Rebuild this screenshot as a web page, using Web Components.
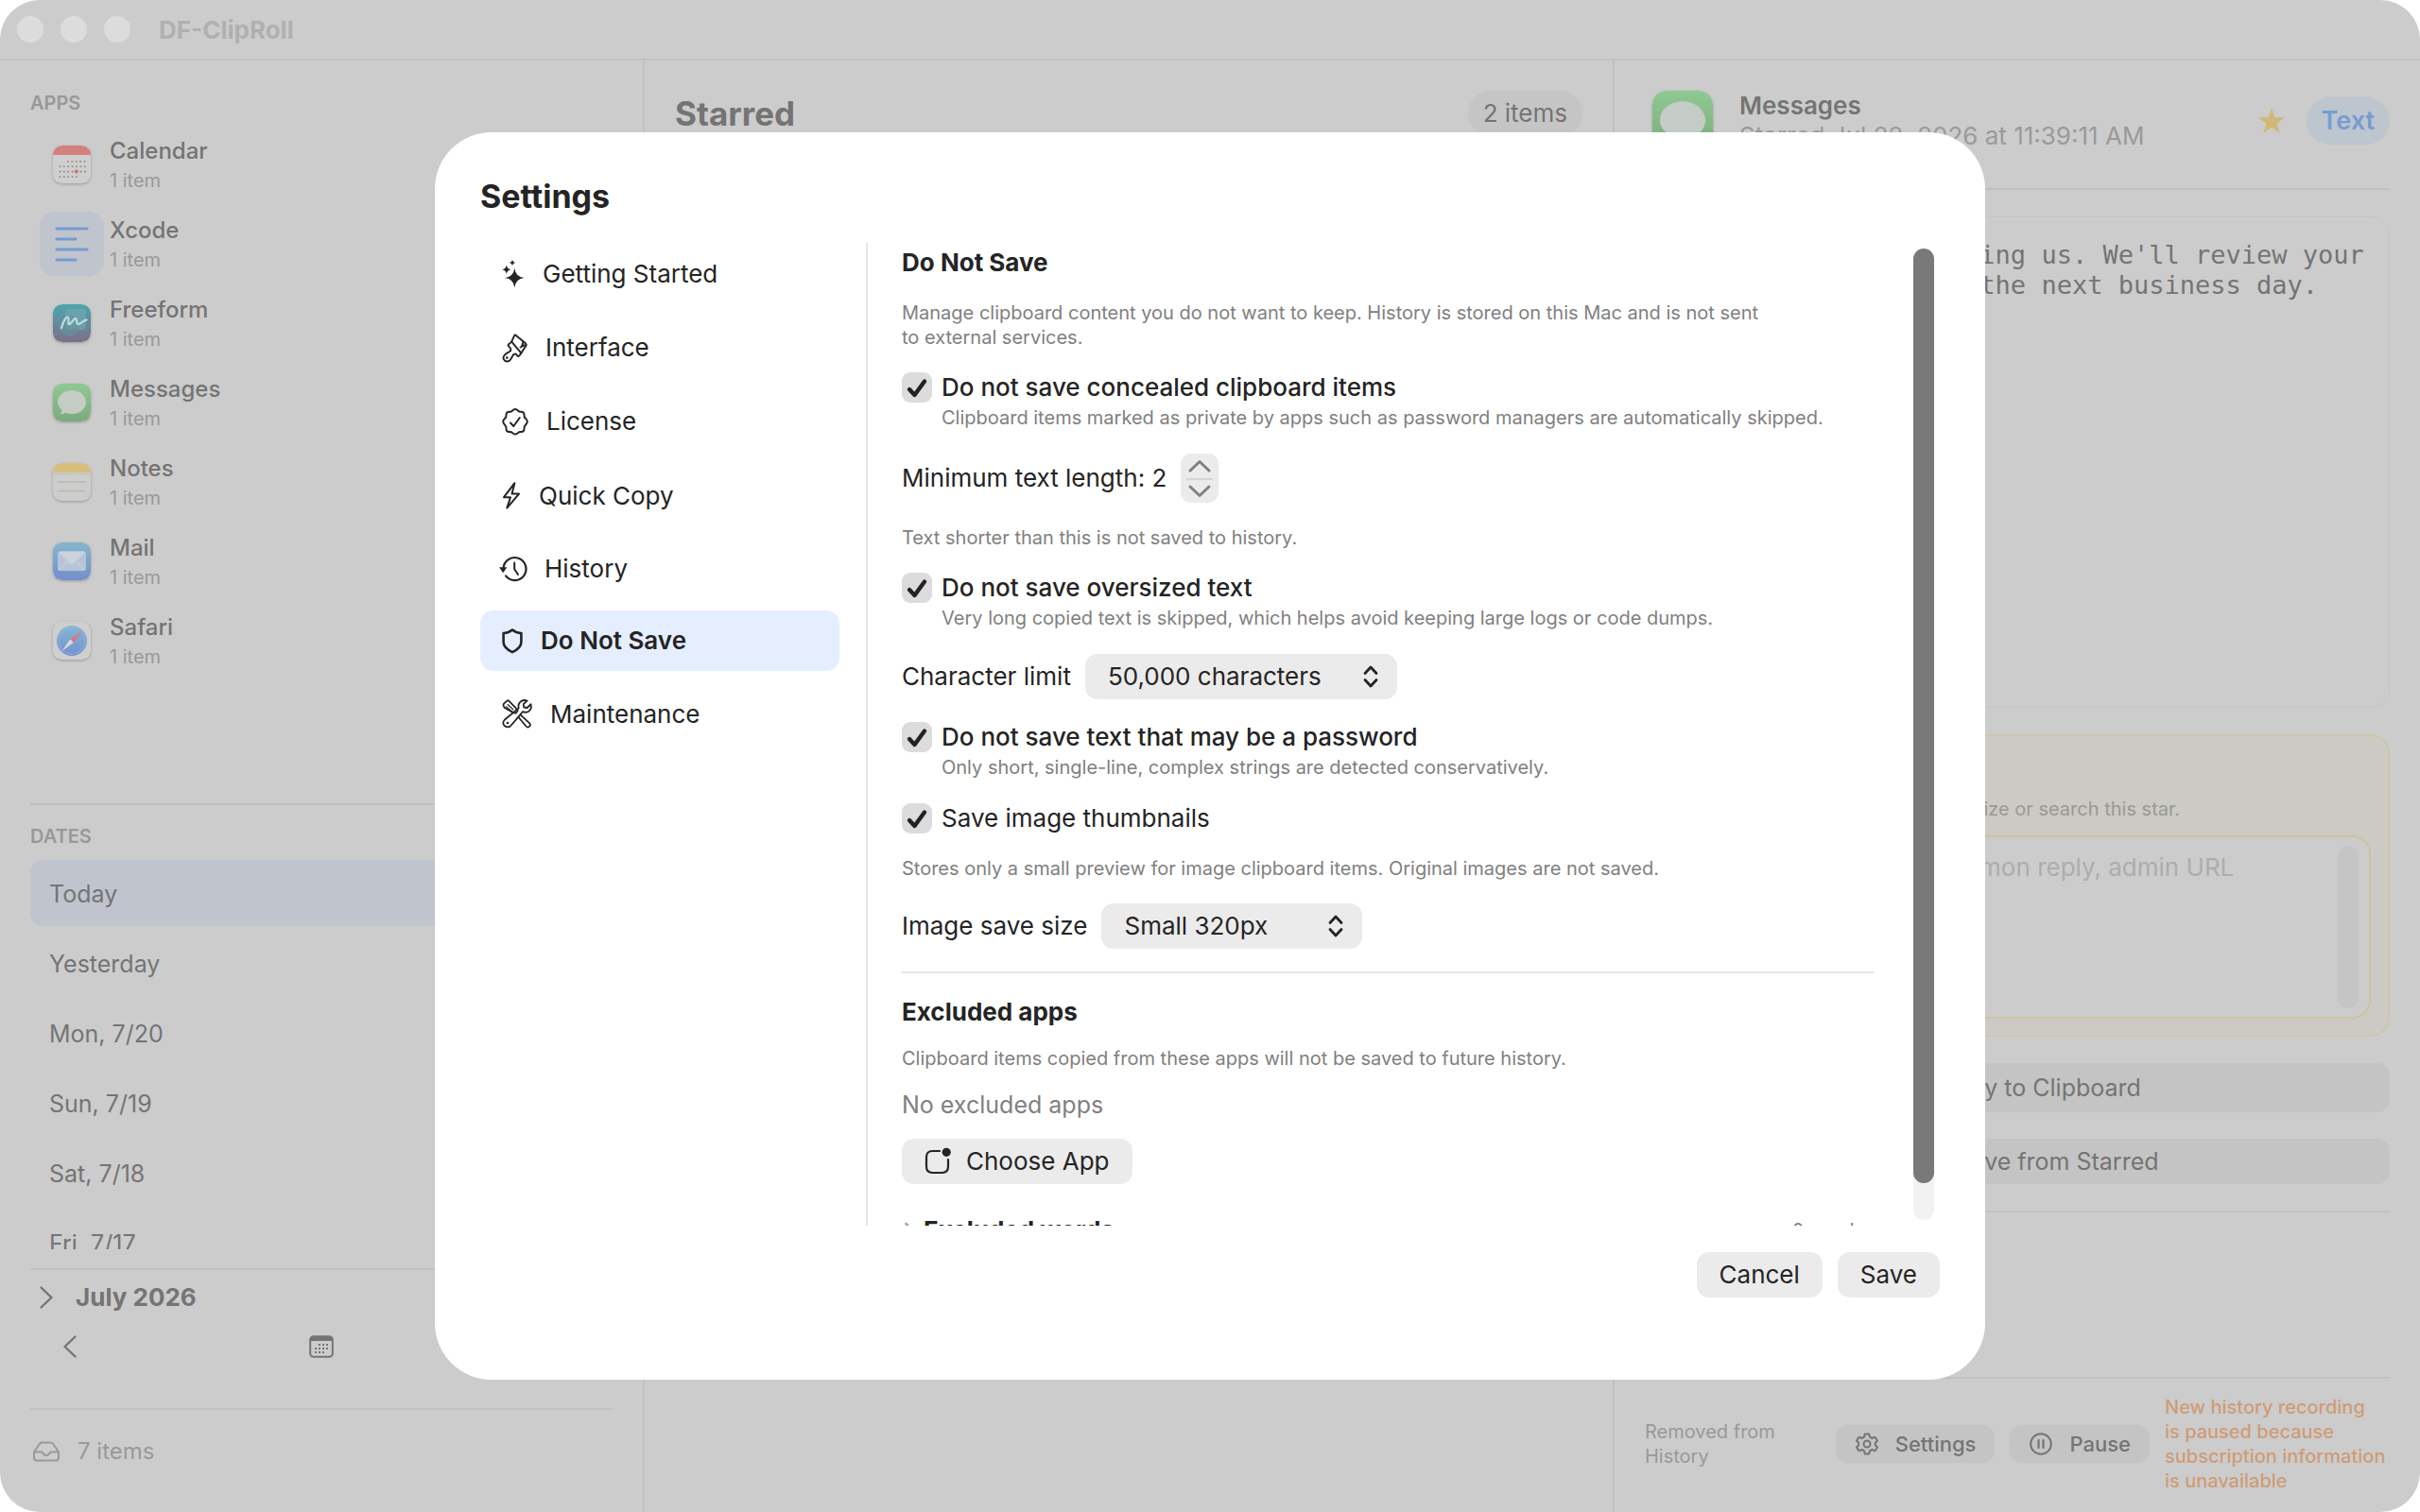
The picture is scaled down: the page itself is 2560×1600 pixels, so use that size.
<!DOCTYPE html>
<html lang="en">
<head>
<meta charset="utf-8">
<title>DF-ClipRoll</title>
<style>
    html, body {
        height: 100%;
    }

    body {
        margin: 0;
        background: #fff;
        color: #242424;
        font: 25px/32px Inter, "Liberation Sans", sans-serif;
    }
</style>
</head>
<body>
<clip-window>
    <title-bar slot="title">DF-ClipRoll</title-bar>
    <side-bar slot="sidebar"></side-bar>
    <list-pane slot="list" heading="Starred" count="2 items"></list-pane>
    <detail-pane slot="detail"></detail-pane>
</clip-window>
<settings-dialog></settings-dialog>

<script>
// Line icons: [width, height, markup]
const ICONS = {
    sparkles: [24, 30, `<g fill="currentColor" stroke="none">
        <path d="M13.3 8.7Q14.4 17.900 23.600 19Q14.400 20.100 13.300 29.300Q12.200 20.100 3 19Q12.200 17.900 13.300 8.700z"/>
        <path d="M4.800 5.500Q5.400 9.700 9.600 10.300Q5.400 10.900 4.800 15.100Q4.200 10.900 0 10.300Q4.200 9.700 4.800 5.500z"/>
        <path d="M11 0Q11.500 2.500 14 3Q11.500 3.500 11 6Q10.500 3.500 8 3Q10.500 2.500 11 0z"/></g>`],
    brush: [27, 30, `<g stroke-width="1.9"><path d="M10.200 8.600L13 2.300Q13.600 1 14.900 1.900L25.200 10.600Q26.300 11.600 25.500 12.800L20.300 20.600"/>
        <path d="M10.200 8.600L20.300 20.600L18.500 23.300Q17.600 24.600 16.400 23.500L14.300 21.400L12.100 22.200L9.400 27Q6.800 31 3 28.600Q-.4 25.400 3.600 21.900L9.200 18.200L9.300 16L6.900 13.200Q6 12 7.300 11.100z"/>
        <path d="M24.200 12.200L19.500 14.500M22.500 8.800L21 13.400"/></g><circle cx="5.300" cy="25.600" r="1.300" fill="currentColor" stroke="none"/>`],
    seal: [28, 30, `<path stroke-width="2" d="M14 2Q15.600 2 16.900 3.500Q18.200 4.900 20 4.700Q23.500 4.500 23.500 8Q23.300 10.300 24.900 11.800Q28.700 15 24.900 18.700Q23.300 20.200 23.500 22.500Q23.500 26.300 20 26Q18.200 25.800 16.900 27.100Q14 30 11.100 27.100Q9.800 25.800 8 26Q4.500 26.300 4.500 22.500Q4.700 20.200 3.100 18.700Q-.7 15 3.100 11.800Q4.700 10.300 4.500 8Q4.500 4.500 8 4.700Q9.800 4.900 11.100 3.500Q12.400 2 14 2z"/>
        <path stroke-width="2" d="M9 16.500L12.300 20L18.800 11"/>`],
    bolt: [20, 31, `<path stroke-width="2" d="M13.400 2.200L2 17.200H9L5.300 28.600L18 13.600H10.500z"/>`],
    history: [26, 28, `<path stroke-width="2.200" d="M1.500 13.600A12 12 0 1 1 4 21.400"/><path d="M-3 12.200H5.300L1.200 18.300z" fill="currentColor" stroke="none"/>
        <path stroke-width="2" d="M13.200 7.500V14.200L17 20"/>`],
    shield: [22, 28, `<path stroke-width="2.600" d="M11 2.500C13.600 4.700 16.800 5.800 20.400 6V15.500C20.400 20.600 15.800 23.800 11 26.200C6.200 23.800 1.600 20.600 1.600 15.500V6C5.200 5.800 8.400 4.700 11 2.500z"/>`],
    tools: [32, 31, `<g stroke-width="1.800"><path d="M1.600 6.600Q1 5.500 2 4.600L5.400 1.600Q6.400 .8 7.500 1.800L14.800 9.400L16.700 12L14.700 14.600L12.500 14.400L2.500 8.600z"/>
        <path d="M6.200 5.500L12 11M4.600 7.700L10 12.700" stroke-width="1.100"/>
        <path d="M17.500 19L25.500 28.500Q27.300 30.500 29.200 28.700Q30.800 27 29 25.200L19.800 16.600"/>
        <path d="M26.700 1.500L22.700 5.200L23.300 8.500L26.700 9L30.500 5.200Q32 10.500 27.800 13Q25 14.400 22 13.200L10.200 27Q7 31 3 28.300Q-.5 25.200 3 21.500L17.700 9.400Q16.500 5 20 2.200Q23 .2 26.700 1.500z"/></g><circle cx="6" cy="25" r="1.300" fill="currentColor" stroke="none"/>`],
    badge: [28, 30, `<path stroke-width="2.200" d="M16 4H8.500Q2 4 2 10.500V20.500Q2 27 8.500 27H18.500Q25 27 25 20.500V13"/><circle cx="23.200" cy="5.300" r="4.600" fill="currentColor" stroke="none"/>`],
    right: [14, 24, `<path stroke-width="2.400" d="M1.500 1.500L12.500 12L1.500 22.500"/>`],
    left: [14, 24, `<path stroke-width="2.400" d="M12.500 1.500L1.500 12L12.500 22.500"/>`],
    small: [10, 18, `<path stroke-width="2.800" d="M1.500 2L8 9L1.500 16"/>`],
    up: [24, 14, `<path stroke-width="3" d="M2 12L12 2.500L22 12"/>`],
    down: [24, 14, `<path stroke-width="3" d="M2 2L12 11.500L22 2"/>`],
    updown: [16, 24, `<path stroke-width="2.800" d="M2 8.500L8 2L14 8.500M2 15.500L8 22L14 15.500"/>`],
    calendar: [26, 24, `<rect x="1.200" y="1.200" width="23.600" height="21.600" rx="3.500" stroke-width="2"/><path d="M2 2H24V6H2z" fill="currentColor" stroke="none"/>
        <path stroke-width="2" stroke-linecap="butt" stroke-dasharray="2 2" d="M10 10H21M6 14H21M6 18H17"/>`],
    tray: [30, 22, `<path stroke-width="2" d="M2 11.500L7.800 3Q8.800 1.500 10.500 1.500H19.500Q21.200 1.500 22.200 3L28 11.500V17.500Q28 20.500 25 20.500H5Q2 20.500 2 17.500zM2 11.500H10Q11 11.500 11.400 12.700Q12.400 15 15 15Q17.600 15 18.600 12.700Q19 11.500 20 11.500H28"/>`],
    gear: [26, 26, `<path stroke-width="2" d="M10.800 2.500H15.200L16 5.700L18.500 7L21.500 5.700L24 9.500L21.800 11.800V14.200L24 16.500L21.500 20.300L18.500 19L16 20.300L15.200 23.500H10.800L10 20.300L7.500 19L4.500 20.300L2 16.500L4.200 14.200V11.800L2 9.500L4.500 5.700L7.500 7L10 5.700z"/><circle cx="13" cy="13" r="3.500" stroke-width="2"/>`],
    pause: [26, 26, `<circle cx="13" cy="13" r="10.800" stroke-width="2"/><path stroke-width="2.200" d="M10.500 9V17M15.500 9V17"/>`],
    star: [30, 30, `<path fill="currentColor" stroke="none" d="M15 1L18.500 11.200H29.200L20.600 17.600L23.800 28L15 21.700L6.200 28L9.400 17.600L.8 11.200H11.500z"/>`],
    copy: [28, 30, `<rect x="8" y="2" width="18" height="20" rx="4" stroke-width="2"/><path stroke-width="2" d="M8 8H6Q2 8 2 12V24Q2 28 6 28H16Q20 28 20 24V22"/>`],
    slash: [28, 30, `<path stroke-width="2" d="M14 3L17.300 11.500L26 12L19 17.600L21.500 26L14 21L6.500 26L9 17.600L2 12L10.700 11.500zM3 3L25 27"/>`],
    lines: [36, 44, `<path stroke-width="3" d="M2 6H34M2 17H22M2 28H34M2 39H22"/>`]
};

class ClipIcon extends HTMLElement {
    constructor() {
        super();
        this.attachShadow({ mode: 'open' });
    }

    connectedCallback() {
        const [width, height, body] = ICONS[this.getAttribute('name')];
        this.shadowRoot.innerHTML = `
            <style>
                :host { display: block; flex: none; }
                svg { display: block; overflow: visible; }
            </style>
            <svg width="${width}" height="${height}" viewBox="0 0 ${width} ${height}" fill="none" stroke="currentColor"
                stroke-linecap="round" stroke-linejoin="round" aria-hidden="true">${body}</svg>
        `;
    }
}
customElements.define('clip-icon', ClipIcon);

// Coloured application icons on a 40 x 40 grid
const APPS = {
    calendar: `<rect width="40" height="40" rx="9.500" fill="#cfcfcf"/><path d="M0 10V9.500A9.500 9.500 0 0 1 9.500 0H30.500A9.500 9.500 0 0 1 40 9.500V10z" fill="#d37f80"/>
        <g stroke="#8b8b8b" stroke-width="1.600" stroke-dasharray="1.800 2.600"><path d="M15 17H35M6.500 22.300H35M6.500 27.600H35M6.500 33H26"/></g><circle cx="24.800" cy="27.600" r="2" fill="#d96f6f"/>`,
    freeform: `<rect width="40" height="40" rx="9.500" fill="url(#g)"/><rect x="13" y="5" width="22" height="22" rx="4" fill="#78a9b4" opacity=".6"/><circle cx="17" cy="23" r="11" fill="#62939c" opacity=".6"/>
        <path d="M9 25C11 18 14 12 16 14C18 16 15 21 17 21C20 21 22 14 24 15C26 16 24 21 27 21C30 21 31 17 35.500 16.500" fill="none" stroke="#b5dcdc" stroke-width="2.400" stroke-linecap="round"/>`,
    messages: `<rect width="40" height="40" rx="9.500" fill="url(#g)"/><path d="M20 7C28.500 7 35 12.500 35 19.500S28.500 32 20 32C17.800 32 15.600 31.600 13.700 30.800C12 31.600 10 32.200 7.500 32C9 30.800 9.700 29.300 9.800 28C6.800 25.800 5 22.900 5 19.500C5 12.500 11.500 7 20 7z" fill="#c5cbc5"/>`,
    notes: `<rect width="40" height="40" rx="9.500" fill="#cdcdcb"/><path d="M0 10V9.500A9.500 9.500 0 0 1 9.500 0H30.500A9.500 9.500 0 0 1 40 9.500V10z" fill="#d7bf79"/>
        <path d="M1 11.500H39" stroke="#aaa" stroke-dasharray="1 1.500"/><path d="M5 20H35M5 29.500H35" stroke="#b9b9b9" stroke-width="1.600"/>`,
    mail: `<rect width="40" height="40" rx="9.500" fill="url(#g)"/><rect x="5" y="9.500" width="30" height="20.500" rx="3" fill="#b6c3d8"/><path d="M6 10.500L17.300 21.600Q20 24 22.700 21.600L34 10.500Q33.500 9.500 32 9.500H8Q6.500 9.500 6 10.500z" fill="#ccd3dc"/><path d="M6.500 29L15.500 20M33.500 29L24.500 20" stroke="#d4d9e0" stroke-width="1"/>`,
    safari: `<rect width="40" height="40" rx="9.500" fill="#cfcfcf"/><circle cx="20" cy="20" r="16" fill="url(#g)"/><circle cx="20" cy="20" r="14" fill="none" stroke="#a5c0de" stroke-width="1.500" stroke-dasharray=".7 1.500"/>
        <path d="M31 9.500L18.200 18.300L21.800 21.900z" fill="#d9787a"/><path d="M9.500 31L18.200 18.300L21.800 21.900z" fill="#d8d8d8"/>`
};
const GRADIENTS = {
    freeform: ['#4aa6ae', '#7c6f88'],
    messages: ['#8ec992', '#7baa7e'],
    mail: ['#85b6cf', '#748fcb'],
    safari: ['#86b5d3', '#7192cf']
};

class AppIcon extends HTMLElement {
    constructor() {
        super();
        this.attachShadow({ mode: 'open' });
    }

    connectedCallback() {
        const name = this.getAttribute('name');
        const size = this.getAttribute('size') || 40;
        const [from, to] = GRADIENTS[name] || ['#ccc', '#ccc'];
        this.shadowRoot.innerHTML = `
            <style>
                :host { display: block; flex: none; }
                svg { display: block; border-radius: 24%; box-shadow: 0 1px 3px rgba(0, 0, 0, .25); }
            </style>
            <svg width="${size}" height="${size}" viewBox="0 0 40 40" aria-hidden="true">
                <linearGradient id="g" x1="0" y1="0" x2="0" y2="1"><stop stop-color="${from}"/><stop offset="1" stop-color="${to}"/></linearGradient>
                ${APPS[name]}
            </svg>
        `;
    }
}
customElements.define('app-icon', AppIcon);

class ClipWindow extends HTMLElement {
    constructor() {
        super();
        this.attachShadow({ mode: 'open' });
        this.shadowRoot.innerHTML = `
            <style>
                :host {
                    display: flex;
                    flex-direction: column;
                    height: 100vh;
                    overflow: hidden;
                    border-radius: 42px;
                    background: #ccc;
                    color: #747474;
                }

                .panes {
                    flex: 1;
                    min-height: 0;
                    display: grid;
                    grid-template-columns: 682px minmax(0, 1fr) 852px;
                }

                ::slotted(*) {
                    min-width: 0;
                    min-height: 0;
                }
            </style>
            <slot name="title"></slot>
            <div class="panes">
                <slot name="sidebar"></slot>
                <slot name="list"></slot>
                <slot name="detail"></slot>
            </div>
        `;
    }
}
customElements.define('clip-window', ClipWindow);

class TitleBar extends HTMLElement {
    constructor() {
        super();
        this.attachShadow({ mode: 'open' });
        this.shadowRoot.innerHTML = `
            <style>
                :host {
                    display: flex;
                    align-items: center;
                    gap: 18px;
                    height: 62px;
                    padding: 0 18px;
                    border-bottom: 2px solid #c1c1c1;
                    color: #b0b0b0;
                    font-size: 26px;
                    font-weight: 700;
                }

                i {
                    width: 28px;
                    height: 28px;
                    border-radius: 50%;
                    background: #dcdcdc;
                }

                span {
                    padding: 2px 0 0 12px;
                }
            </style>
            <i></i><i></i><i></i>
            <span><slot></slot></span>
        `;
    }
}
customElements.define('title-bar', TitleBar);

class AppRow extends HTMLElement {
    constructor() {
        super();
        this.attachShadow({ mode: 'open' });
    }

    connectedCallback() {
        const icon = this.getAttribute('icon');
        const tile = icon === 'lines';
        this.shadowRoot.innerHTML = `
            <style>
                :host { display: block; }

                button {
                    display: flex;
                    align-items: center;
                    gap: 6px;
                    width: 100%;
                    padding: 0 0 0 10px;
                    border: 0;
                    background: none;
                    color: inherit;
                    font: inherit;
                    text-align: left;
                }

                .icon {
                    display: grid;
                    place-items: center;
                    width: 68px;
                    height: 68px;
                    border-radius: 16px;
                }

                .tile {
                    background: #bfc4cd;
                    color: #769cd2;
                }

                .text {
                    padding-top: 2px;
                }

                .name {
                    display: block;
                    font-size: 24px;
                    font-weight: 500;
                }

                small {
                    display: block;
                    color: #999;
                    font-size: 20px;
                    line-height: 30px;
                }
            </style>
            <button type="button">
                <span class="icon ${tile ? 'tile' : ''}">${tile ? '<clip-icon name="lines"></clip-icon>' : `<app-icon name="${icon}"></app-icon>`}</span>
                <span class="text"><span class="name"><slot></slot></span><small>1 item</small></span>
            </button>
        `;
    }
}
customElements.define('app-row', AppRow);

class DateRow extends HTMLElement {
    constructor() {
        super();
        this.attachShadow({ mode: 'open' });
        this.shadowRoot.innerHTML = `
            <style>
                :host {
                    display: block;
                    flex: none;
                }

                button {
                    width: 100%;
                    height: 70px;
                    padding: 2px 20px 0;
                    border: 0;
                    border-radius: 14px;
                    background: none;
                    color: inherit;
                    font: inherit;
                    text-align: left;
                }

                :host([selected]) button {
                    background: #bfc4cd;
                }
            </style>
            <button type="button"><slot></slot></button>
        `;
    }
}
customElements.define('date-row', DateRow);

class SideBar extends HTMLElement {
    constructor() {
        super();
        this.attachShadow({ mode: 'open' });
        this.shadowRoot.innerHTML = `
            <style>
                :host {
                    display: flex;
                    flex-direction: column;
                    padding: 33px 32px 0;
                    border-right: 2px solid #c1c1c1;
                }

                h2 {
                    margin: 0 0 19px;
                    color: #989898;
                    font-size: 20px;
                    line-height: 24px;
                    font-weight: 600;
                }

                .apps {
                    flex: 1;
                    min-height: 0;
                    display: flex;
                    flex-direction: column;
                    gap: 16px;
                }

                .dates {
                    padding-top: 21px;
                    border-top: 2px solid #c1c1c1;
                }

                .dates h2 {
                    margin-bottom: 13px;
                }

                .list {
                    display: flex;
                    flex-direction: column;
                    gap: 4px;
                    height: 412px;
                    margin-bottom: 20px;
                    overflow: hidden;
                }

                .month {
                    height: 137px;
                    padding-top: 9px;
                    border-top: 2px solid #c1c1c1;
                }

                .row {
                    display: flex;
                    align-items: center;
                    height: 40px;
                    padding: 0 10px;
                    gap: 24px;
                }

                .nav {
                    justify-content: space-between;
                    margin-top: 12px;
                    padding: 0 35px;
                }

                .foot {
                    gap: 18px;
                    padding: 24px 2px 44px;
                    border-top: 2px solid #c1c1c1;
                    color: #999;
                    font-size: 24px;
                }

                button {
                    display: flex;
                    padding: 0;
                    border: 0;
                    background: none;
                    color: inherit;
                    font: inherit;
                }

                strong {
                    font-size: 26px;
                    font-weight: 700;
                }
            </style>
            <h2>APPS</h2>
            <div class="apps">
                <app-row icon="calendar">Calendar</app-row>
                <app-row icon="lines">Xcode</app-row>
                <app-row icon="freeform">Freeform</app-row>
                <app-row icon="messages">Messages</app-row>
                <app-row icon="notes">Notes</app-row>
                <app-row icon="mail">Mail</app-row>
                <app-row icon="safari">Safari</app-row>
            </div>
            <div class="dates">
                <h2>DATES</h2>
                <div class="list">
                    <date-row selected>Today</date-row>
                    <date-row>Yesterday</date-row>
                    <date-row>Mon, 7/20</date-row>
                    <date-row>Sun, 7/19</date-row>
                    <date-row>Sat, 7/18</date-row>
                    <date-row>Fri, 7/17</date-row>
                </div>
            </div>
            <div class="month">
                <div class="row">
                    <button type="button" aria-label="Expand month"><clip-icon name="right"></clip-icon></button>
                    <strong>July 2026</strong>
                </div>
                <div class="row nav">
                    <button type="button" aria-label="Previous month"><clip-icon name="left"></clip-icon></button>
                    <button type="button" aria-label="Go to today"><clip-icon name="calendar"></clip-icon></button>
                    <button type="button" aria-label="Next month"><clip-icon name="right"></clip-icon></button>
                </div>
            </div>
            <div class="row foot"><clip-icon name="tray"></clip-icon>7 items</div>
        `;
    }
}
customElements.define('side-bar', SideBar);

class ListPane extends HTMLElement {
    constructor() {
        super();
        this.attachShadow({ mode: 'open' });
        this.shadowRoot.innerHTML = `
            <style>
                :host {
                    display: block;
                    padding: 32px 32px 0;
                    border-right: 2px solid #c1c1c1;
                }

                header {
                    display: flex;
                    align-items: center;
                    justify-content: space-between;
                }

                h1 {
                    margin: 0;
                    font-size: 35px;
                    font-weight: 700;
                }

                span {
                    padding: 8px 16px;
                    border-radius: 24px;
                    background: #c5c5c5;
                    font-size: 26px;
                }
            </style>
            <header><h1></h1><span></span></header>
        `;
    }

    connectedCallback() {
        this.shadowRoot.querySelector('h1').textContent = this.getAttribute('heading');
        this.shadowRoot.querySelector('span').textContent = this.getAttribute('count');
    }
}
customElements.define('list-pane', ListPane);

// Grey push button, with an optional icon before the label
class PushButton extends HTMLElement {
    constructor() {
        super();
        this.attachShadow({ mode: 'open' });
    }

    connectedCallback() {
        const icon = this.getAttribute('icon');
        this.shadowRoot.innerHTML = `
            <style>
                :host { display: block; }

                button {
                    display: flex;
                    align-items: center;
                    justify-content: center;
                    gap: var(--button-gap, 16px);
                    width: 100%;
                    height: var(--button-height, 48px);
                    padding: 0 var(--button-padding, 24px);
                    border: 0;
                    border-radius: 13px;
                    background: var(--button-color, #ebebeb);
                    color: inherit;
                    font: inherit;
                    white-space: nowrap;
                }
            </style>
            <button type="button">${icon ? `<clip-icon name="${icon}"></clip-icon>` : ''}<slot></slot></button>
        `;
    }
}
customElements.define('push-button', PushButton);

class DetailPane extends HTMLElement {
    constructor() {
        super();
        this.attachShadow({ mode: 'open' });
        this.shadowRoot.innerHTML = `
            <style>
                :host {
                    display: flex;
                    flex-direction: column;
                    padding: 0 32px;
                    --button-color: #c4c4c4;
                    --button-gap: 20px;
                }

                header {
                    display: flex;
                    align-items: center;
                    height: 127px;
                    padding: 0 0 8px 8px;
                    border-bottom: 2px solid #c1c1c1;
                    font-size: 26px;
                }

                .who {
                    flex: 1;
                    padding-left: 28px;
                }

                h2 {
                    margin: 0;
                    font-size: 26px;
                    font-weight: 600;
                }

                .who p {
                    margin: 0;
                    color: #9a9a9a;
                }

                .star {
                    color: #d0b878;
                }

                .kind {
                    margin-left: 22px;
                    padding: 9px 16px;
                    border-radius: 25px;
                    background: #bdc5ce;
                    color: #769cd2;
                    font-size: 27px;
                    font-weight: 600;
                }

                .preview {
                    height: 480px;
                    margin: 28px 0;
                    padding: 24px 12px 14px;
                    border: 1px solid #c5c5c5;
                    border-radius: 20px;
                    font: 27px/32px "DejaVu Sans Mono", monospace;
                }

                .preview p {
                    margin: 0;
                }

                .note {
                    display: flex;
                    flex-direction: column;
                    margin-bottom: 28px;
                    padding: 22px 18px 17px 12px;
                    border: 2px solid #cec6ab;
                    border-radius: 20px;
                    background: #cbcac4;
                }

                .note label {
                    display: block;
                    font-weight: 600;
                }

                .note p {
                    margin: 10px 0 15px;
                    color: #999994;
                    font-size: 20px;
                    line-height: 26px;
                }

                .field {
                    display: flex;
                    height: 172px;
                    padding: 9px 11px;
                    border: 2px solid #cec3a2;
                    border-radius: 20px;
                    background: #ccc;
                }

                textarea {
                    flex: 1;
                    padding: 7px 4px;
                    border: 0;
                    background: none;
                    font: inherit;
                    font-size: 26px;
                    resize: none;
                    outline: 0;
                }

                textarea::placeholder {
                    color: #adadad;
                }

                .track {
                    width: 22px;
                    border-radius: 11px;
                    background: #c5c5c5;
                }

                .copy {
                    margin-bottom: 28px;
                    --button-height: 52px;
                }

                .actions {
                    flex: 1;
                    padding-bottom: 28px;
                }

                .rest {
                    height: 174px;
                    border-top: 2px solid #c1c1c1;
                }

                footer {
                    display: flex;
                    align-items: center;
                    gap: 16px;
                    height: 137px;
                    padding: 0 0 4px;
                    border-top: 2px solid #c1c1c1;
                    color: #999;
                    font-size: 20px;
                    line-height: 26px;
                }

                footer p {
                    margin: 0;
                }

                .status {
                    flex: 1;
                }

                .status span {
                    display: block;
                    width: 150px;
                }

                footer push-button {
                    color: #747474;
                    font-size: 22px;
                    font-weight: 500;
                    --button-height: 40px;
                    --button-padding: 20px;
                    --button-gap: 17px;
                }

                .warn {
                    width: 238px;
                    color: #cf9c76;
                    font-weight: 500;
                }
            </style>
            <header>
                <app-icon name="messages" size="64"></app-icon>
                <div class="who">
                    <h2>Messages</h2>
                    <p>Starred Jul 22, 2026 at 11:39:11 AM</p>
                </div>
                <clip-icon class="star" name="star"></clip-icon>
                <span class="kind">Text</span>
            </header>
            <div class="preview">
                <p>Thank you for contacting us. We'll review your request and reply by the next business day.</p>
            </div>
            <section class="note">
                <label for="memo">Star note</label>
                <p>Add a short memo to help you organize or search this star.</p>
                <div class="field">
                    <textarea id="memo" placeholder="e.g. account support, common reply, admin URL"></textarea>
                    <div class="track"></div>
                </div>
            </section>
            <div class="actions">
                <push-button class="copy" icon="copy">Copy to Clipboard</push-button>
                <push-button icon="slash">Remove from Starred</push-button>
            </div>
            <div class="rest"></div>
            <footer>
                <p class="status"><span>Removed from History</span></p>
                <push-button icon="gear">Settings</push-button>
                <push-button icon="pause">Pause</push-button>
                <p class="warn">New history recording<br>is paused because subscription information is unavailable</p>
            </footer>
        `;
    }
}
customElements.define('detail-pane', DetailPane);

class NavItem extends HTMLElement {
    constructor() {
        super();
        this.attachShadow({ mode: 'open' });
    }

    connectedCallback() {
        this.shadowRoot.innerHTML = `
            <style>
                :host { display: block; }

                button {
                    display: flex;
                    align-items: center;
                    gap: 19px;
                    width: 100%;
                    padding: 18px 23px;
                    border: 0;
                    border-radius: 14px;
                    background: none;
                    color: inherit;
                    font: inherit;
                    line-height: 28px;
                }

                :host([selected]) button {
                    background: #e5eeff;
                    font-weight: 600;
                }
            </style>
            <button type="button"><clip-icon name="${this.getAttribute('icon')}"></clip-icon><slot></slot></button>
        `;
    }
}
customElements.define('nav-item', NavItem);

class CheckRow extends HTMLElement {
    constructor() {
        super();
        this.attachShadow({ mode: 'open' });
    }

    connectedCallback() {
        const hint = this.getAttribute('hint');
        this.shadowRoot.innerHTML = `
            <style>
                :host { display: block; }

                label {
                    display: flex;
                    align-items: center;
                    gap: 10px;
                }

                input {
                    appearance: none;
                    width: 32px;
                    height: 32px;
                    margin: 0;
                    border-radius: 9px;
                    background: #dcdcdc;
                }

                input:checked {
                    background: #dcdcdc url("data:image/svg+xml,%3Csvg xmlns='http://www.w3.org/2000/svg' viewBox='0 0 32 32'%3E%3Cpath d='M8 18L13.500 24L24 9.500' fill='none' stroke='%23222' stroke-width='4.400' stroke-linecap='round' stroke-linejoin='round'/%3E%3C/svg%3E");
                }

                p {
                    margin: 3px 0 0 42px;
                    color: #808080;
                    font-size: 20px;
                    line-height: 27px;
                    font-weight: 400;
                }
            </style>
            <label><input type="checkbox" checked><slot></slot></label>
            ${hint ? `<p>${hint}</p>` : ''}
        `;
    }
}
customElements.define('check-row', CheckRow);

class SelectField extends HTMLElement {
    constructor() {
        super();
        this.attachShadow({ mode: 'open' });
    }

    connectedCallback() {
        this.shadowRoot.innerHTML = `
            <style>
                :host {
                    display: flex;
                    align-items: center;
                    gap: 15px;
                }

                div {
                    display: grid;
                    align-items: center;
                }

                select, clip-icon {
                    grid-area: 1 / 1;
                }

                select {
                    appearance: none;
                    min-width: 276px;
                    height: 48px;
                    padding: 0 80px 0 24px;
                    border: 0;
                    border-radius: 13px;
                    background: #ebebeb;
                    color: inherit;
                    font: inherit;
                }

                clip-icon {
                    justify-self: end;
                    margin-right: 20px;
                    pointer-events: none;
                }
            </style>
            <label for="choice"><slot></slot></label>
            <div>
                <select id="choice"><option>${this.getAttribute('value')}</option></select>
                <clip-icon name="updown"></clip-icon>
            </div>
        `;
    }
}
customElements.define('select-field', SelectField);

class StepperField extends HTMLElement {
    constructor() {
        super();
        this.attachShadow({ mode: 'open' });
        this.shadowRoot.innerHTML = `
            <style>
                :host {
                    display: flex;
                    align-items: center;
                    gap: 15px;
                }

                .stepper {
                    display: grid;
                    grid-template-rows: 1fr 1fr;
                    width: 40px;
                    height: 52px;
                    border-radius: 11px;
                    background: #ebebeb;
                    color: #808080;
                }

                button {
                    display: grid;
                    place-items: center;
                    margin: 0 6px;
                    padding: 0;
                    border: 0;
                    background: none;
                    color: inherit;
                }

                button + button {
                    border-top: 2px solid #d4d4d4;
                }
            </style>
            <span><slot></slot></span>
            <div class="stepper">
                <button type="button" aria-label="Increase"><clip-icon name="up"></clip-icon></button>
                <button type="button" aria-label="Decrease"><clip-icon name="down"></clip-icon></button>
            </div>
        `;
    }
}
customElements.define('stepper-field', StepperField);

class SettingsDialog extends HTMLElement {
    constructor() {
        super();
        this.attachShadow({ mode: 'open' });
        this.shadowRoot.innerHTML = `
            <style>
                :host {
                    position: fixed;
                    inset: 0;
                    display: flex;
                    justify-content: center;
                    padding: 140px 80px;
                }

                .dialog {
                    display: flex;
                    flex-direction: column;
                    box-sizing: border-box;
                    width: 100%;
                    max-width: 1640px;
                    padding: 48px 48px 87px;
                    border-radius: 60px;
                    background: #fff;
                    font-size: 26px;
                }

                h1 {
                    margin: 0 0 29px;
                    font-size: 34px;
                    line-height: 40px;
                    font-weight: 700;
                }

                .body {
                    flex: 1;
                    min-height: 0;
                    display: grid;
                    grid-template-columns: 380px minmax(0, 1fr);
                    gap: 28px;
                }

                nav {
                    display: flex;
                    flex-direction: column;
                    gap: 12px;
                }

                .page {
                    display: flex;
                    justify-content: space-between;
                    gap: 42px;
                    padding: 0 6px 0 36px;
                    border-left: 2px solid #e4e4e4;
                    overflow: hidden;
                }

                .content {
                    flex: 1;
                    min-width: 0;
                    display: flex;
                    flex-direction: column;
                    align-items: flex-start;
                    gap: 24px;
                    padding-top: 5px;
                }

                h2, p {
                    margin: 0;
                }

                h2 {
                    font-size: 26px;
                    font-weight: 700;
                }

                .caption {
                    max-width: 940px;
                    color: #808080;
                    font-size: 20px;
                    line-height: 26px;
                }

                .strong {
                    font-weight: 500;
                }

                .excluded {
                    display: flex;
                    flex-direction: column;
                    align-items: flex-start;
                    gap: 20px;
                    align-self: stretch;
                    padding-top: 25px;
                    border-top: 2px solid #e4e4e4;
                }

                .empty {
                    color: #808080;
                    font-size: 25px;
                }

                .words {
                    align-self: stretch;
                    display: flex;
                    align-items: center;
                    justify-content: space-between;
                    margin-top: 13px;
                    padding: 0 10px 0 3px;
                    border: 0;
                    background: none;
                    color: inherit;
                    font: inherit;
                    font-weight: 700;
                }

                .words span {
                    display: flex;
                    align-items: center;
                    gap: 10px;
                }

                .words clip-icon {
                    color: #aaa;
                }

                .words small {
                    color: #808080;
                    font-size: 20px;
                    font-weight: 400;
                }

                .track {
                    width: 22px;
                    height: 1028px;
                    margin-top: 6px;
                    border-radius: 11px;
                    background: #f2f2f2;
                }

                .thumb {
                    height: calc(100% - 39px);
                    border-radius: 11px;
                    background: #797979;
                }

                footer {
                    display: flex;
                    justify-content: flex-end;
                    gap: 16px;
                    margin-top: 28px;
                }
            </style>
            <div class="dialog" role="dialog" aria-label="Settings">
                <h1>Settings</h1>
                <div class="body">
                    <nav>
                        <nav-item icon="sparkles">Getting Started</nav-item>
                        <nav-item icon="brush">Interface</nav-item>
                        <nav-item icon="seal">License</nav-item>
                        <nav-item icon="bolt">Quick Copy</nav-item>
                        <nav-item icon="history">History</nav-item>
                        <nav-item icon="shield" selected>Do Not Save</nav-item>
                        <nav-item icon="tools">Maintenance</nav-item>
                    </nav>
                    <div class="page">
                        <div class="content">
                            <h2>Do Not Save</h2>
                            <p class="caption">Manage clipboard content you do not want to keep. History is stored on this Mac and is not sent<br>to external services.</p>
                            <check-row class="strong" hint="Clipboard items marked as private by apps such as password managers are automatically skipped.">Do not save concealed clipboard items</check-row>
                            <stepper-field>Minimum text length: 2</stepper-field>
                            <p class="caption">Text shorter than this is not saved to history.</p>
                            <check-row class="strong" hint="Very long copied text is skipped, which helps avoid keeping large logs or code dumps.">Do not save oversized text</check-row>
                            <select-field value="50,000 characters">Character limit</select-field>
                            <check-row class="strong" hint="Only short, single-line, complex strings are detected conservatively.">Do not save text that may be a password</check-row>
                            <check-row>Save image thumbnails</check-row>
                            <p class="caption">Stores only a small preview for image clipboard items. Original images are not saved.</p>
                            <select-field value="Small 320px">Image save size</select-field>
                            <div class="excluded">
                                <h2>Excluded apps</h2>
                                <p class="caption">Clipboard items copied from these apps will not be saved to future history.</p>
                                <p class="empty">No excluded apps</p>
                                <push-button icon="badge">Choose App</push-button>
                                <button class="words" type="button">
                                    <span><clip-icon name="small"></clip-icon>Excluded words</span>
                                    <small>0 words</small>
                                </button>
                            </div>
                        </div>
                        <div class="track"><div class="thumb"></div></div>
                    </div>
                </div>
                <footer>
                    <push-button>Cancel</push-button>
                    <push-button>Save</push-button>
                </footer>
            </div>
        `;
    }
}
customElements.define('settings-dialog', SettingsDialog);
</script>
</body>
</html>
